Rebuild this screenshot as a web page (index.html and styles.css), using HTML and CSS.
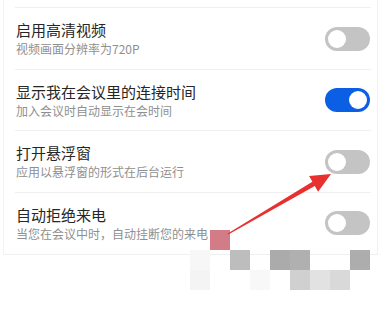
FILE: index.html
```html
<!DOCTYPE html>
<html lang="zh">
<head>
<meta charset="utf-8">
<link rel="stylesheet" href="styles.css">
</head>
<body>
<div class="list">
  <div class="top"></div>
  <div class="row">
    <div class="text">
      <div class="title">启用高清视频</div>
      <div class="sub">视频画面分辨率为720P</div>
    </div>
    <div class="toggle"><span class="knob"></span></div>
  </div>
  <div class="row">
    <div class="text">
      <div class="title">显示我在会议里的连接时间</div>
      <div class="sub">加入会议时自动显示在会时间</div>
    </div>
    <div class="toggle on"><span class="knob"></span></div>
  </div>
  <div class="row">
    <div class="text">
      <div class="title">打开悬浮窗</div>
      <div class="sub">应用以悬浮窗的形式在后台运行</div>
    </div>
    <div class="toggle"><span class="knob"></span></div>
  </div>
  <div class="row last">
    <div class="text">
      <div class="title">自动拒绝来电</div>
      <div class="sub">当您在会议中时，自动挂断您的来电</div>
    </div>
    <div class="toggle"><span class="knob"></span></div>
  </div>
</div>
<div class="mosaic">
  <span class="px pink" style="left:210px;top:230px"></span>
  <span class="px" style="left:190px;top:250px;background:#f7f7f7"></span>
  <span class="px" style="left:230px;top:250px;background:#bdbdbd"></span>
  <span class="px" style="left:270px;top:250px;background:#ababab"></span>
  <span class="px" style="left:290px;top:250px;background:#b0b0b0"></span>
  <span class="px" style="left:350px;top:250px;background:#adadad"></span>
  <span class="px" style="left:190px;top:270px;background:#f4f4f4"></span>
  <span class="px" style="left:250px;top:270px;background:#f8f8f8"></span>
  <span class="px" style="left:290px;top:270px;background:#d0d0d0"></span>
  <span class="px" style="left:310px;top:270px;background:#e2e2e2"></span>
  <span class="px" style="left:330px;top:270px;background:#d9d9d9"></span>
</div>
<svg class="arrow" width="385" height="312" viewBox="0 0 385 312">
  <polygon points="227.7,233.4 312.4,181.7 309.1,176.1 331,174 318.1,191.7 314.8,186.1 228.3,234.6" fill="#e8302f"/>
</svg>
</body>
</html>
```
FILE: styles.css
```css
html, body {
  margin: 0;
  padding: 0;
  background: #ffffff;
}
body {
  width: 385px;
  height: 312px;
  overflow: hidden;
  position: relative;
  font-family: "Noto Sans CJK SC", "Noto Sans", sans-serif;
}
.list {
  margin-left: 3px;
  width: 375px;
  border-left: 1px solid #f3f3f3;
  border-right: 1px solid #f0f0f0;
  border-bottom: 1px solid #f0f0f0;
  box-sizing: border-box;
}
.top {
  height: 7px;
  margin: 0 6px 0 11px;
  border-bottom: 1px solid #f0f0f0;
}
.row {
  display: flex;
  align-items: center;
  justify-content: space-between;
  margin: 0 6px 0 11px;
  padding: 12px 1px 11.5px 1px;
  border-bottom: 1px solid #f0f0f0;
}
.row.last {
  border-bottom: none;
  padding-bottom: 12.5px;
}
.title {
  font-size: 15px;
  line-height: 20px;
  color: #262626;
}
.sub {
  font-size: 12px;
  line-height: 17px;
  color: #8f8f8f;
}
.toggle {
  width: 45px;
  height: 24px;
  border-radius: 12px;
  background: #c4c4c4;
  display: flex;
  align-items: center;
  padding: 0 3px;
  box-sizing: border-box;
  flex: none;
}
.toggle.on {
  background: #0b5fe4;
  justify-content: flex-end;
}
.knob {
  width: 18px;
  height: 18px;
  border-radius: 50%;
  background: #ffffff;
}
.px {
  position: absolute;
  width: 20px;
  height: 20px;
}
.px.pink {
  background: #d27c87;
}
.arrow {
  position: absolute;
  left: 0;
  top: 0;
}
```
